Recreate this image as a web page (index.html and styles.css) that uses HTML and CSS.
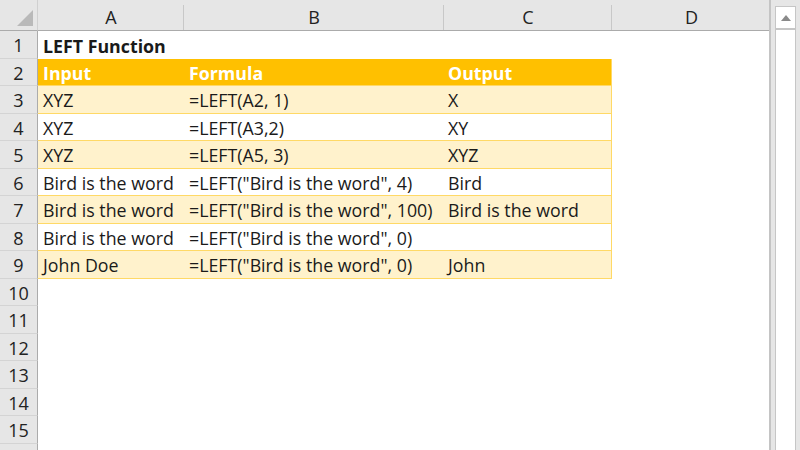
FILE: index.html
```html
<!DOCTYPE html>
<html>
<head>
<meta charset="utf-8">
<link rel="stylesheet" href="styles.css">
</head>
<body>
<div class="app">
  <div class="sheet">
    <div class="corner"><svg width="20" height="20" viewBox="0 0 20 20"><polygon points="18,2 18,18 2,18" fill="#b9b9b9"/></svg></div>
    <div class="colhdr">A</div>
    <div class="colhdr">B</div>
    <div class="colhdr">C</div>
    <div class="colhdr">D</div>

    <div class="rowhdr">1</div>
    <div class="cell bold">LEFT Function</div><div class="cell"></div><div class="cell"></div><div class="cell"></div>

    <div class="rowhdr">2</div>
    <div class="cell th">Input</div><div class="cell th">Formula</div><div class="cell th last">Output</div><div class="cell"></div>

    <div class="rowhdr">3</div>
    <div class="cell band">XYZ</div><div class="cell band">=LEFT(A2, 1)</div><div class="cell band last">X</div><div class="cell"></div>

    <div class="rowhdr">4</div>
    <div class="cell plain">XYZ</div><div class="cell plain">=LEFT(A3,2)</div><div class="cell plain last">XY</div><div class="cell"></div>

    <div class="rowhdr">5</div>
    <div class="cell band">XYZ</div><div class="cell band">=LEFT(A5, 3)</div><div class="cell band last">XYZ</div><div class="cell"></div>

    <div class="rowhdr">6</div>
    <div class="cell plain">Bird is the word</div><div class="cell plain">=LEFT("Bird is the word", 4)</div><div class="cell plain last">Bird</div><div class="cell"></div>

    <div class="rowhdr">7</div>
    <div class="cell band">Bird is the word</div><div class="cell band">=LEFT("Bird is the word", 100)</div><div class="cell band last">Bird is the word</div><div class="cell"></div>

    <div class="rowhdr">8</div>
    <div class="cell plain">Bird is the word</div><div class="cell plain">=LEFT("Bird is the word", 0)</div><div class="cell plain last"></div><div class="cell"></div>

    <div class="rowhdr">9</div>
    <div class="cell band">John Doe</div><div class="cell band">=LEFT("Bird is the word", 0)</div><div class="cell band last">John</div><div class="cell"></div>

    <div class="rowhdr">10</div><div class="cell"></div><div class="cell"></div><div class="cell"></div><div class="cell"></div>
    <div class="rowhdr">11</div><div class="cell"></div><div class="cell"></div><div class="cell"></div><div class="cell"></div>
    <div class="rowhdr">12</div><div class="cell"></div><div class="cell"></div><div class="cell"></div><div class="cell"></div>
    <div class="rowhdr">13</div><div class="cell"></div><div class="cell"></div><div class="cell"></div><div class="cell"></div>
    <div class="rowhdr">14</div><div class="cell"></div><div class="cell"></div><div class="cell"></div><div class="cell"></div>
    <div class="rowhdr">15</div><div class="cell"></div><div class="cell"></div><div class="cell"></div><div class="cell"></div>
    <div class="rowhdr"></div><div class="cell"></div><div class="cell"></div><div class="cell"></div><div class="cell"></div>
  </div>
  <div class="scroll">
    <div class="track">
      <div class="arrow"><svg width="12" height="8" viewBox="0 0 12 8"><polygon points="6,1 11,7 1,7" fill="#8a8a8a"/></svg></div>
    </div>
  </div>
</div>
</body>
</html>
```

FILE: styles.css
```css
html, body {
  margin: 0;
  padding: 0;
  background: #ffffff;
  overflow: hidden;
}
.app {
  width: 800px;
  height: 450px;
  display: flex;
  font-family: "Open Sans", "Liberation Sans", sans-serif;
  color: #1a1a1a;
  background: #e6e6e6;
}
.sheet {
  width: 771px;
  height: 450px;
  display: grid;
  grid-template-columns: 38px 146px 260px 168px 159px;
  grid-template-rows: 31px;
  grid-auto-rows: 27.5px;
  background: #ffffff;
  overflow: hidden;
  box-sizing: border-box;
  border-right: 2px solid #c4c4c4;
}
.corner {
  background: #e6e6e6;
  border-right: 1px solid #d0d0d0;
  border-bottom: 1px solid #ababab;
  box-sizing: border-box;
  display: flex;
  align-items: flex-end;
  justify-content: flex-end;
  padding: 0 2px 2px 0;
}
.colhdr {
  background: #e6e6e6;
  border-bottom: 1px solid #ababab;
  box-sizing: border-box;
  display: flex;
  align-items: center;
  justify-content: center;
  font-size: 18px;
  padding-top: 3px;
  color: #222;
  position: relative;
}
.colhdr::after {
  content: "";
  position: absolute;
  right: 0;
  top: 5px;
  bottom: 0;
  width: 1px;
  background: #c8c8c8;
}
.rowhdr {
  background: #e6e6e6;
  border-right: 1px solid #ababab;
  border-bottom: 1px solid #d4d4d4;
  box-sizing: border-box;
  display: flex;
  align-items: center;
  justify-content: center;
  font-size: 18px;
  color: #222;
  padding-top: 2px;
}
.cell {
  box-sizing: border-box;
  display: flex;
  align-items: center;
  padding: 2px 0 0 5px;
  font-size: 17.8px;
  white-space: nowrap;
  overflow: visible;
}
.bold {
  font-weight: 700;
}
.th {
  background: #ffc000;
  color: #ffffff;
  font-weight: 700;
  border-bottom: 1px solid #ffd966;
}
.band {
  background: #fff2cc;
  border-bottom: 1px solid #ffd966;
}
.plain {
  background: #ffffff;
  border-bottom: 1px solid #ffd966;
}
.last {
  border-right: 1px solid #ffd966;
  padding-left: 4px;
}
.scroll {
  width: 29px;
  height: 450px;
  background: #e6e6e6;
  display: flex;
  padding: 6px 4px 0 4px;
  box-sizing: border-box;
}
.track {
  flex: 1;
  background: #ffffff;
  border: 1px solid #c6c6c6;
  border-bottom: none;
  display: flex;
  flex-direction: column;
}
.arrow {
  height: 21px;
  border-bottom: 2px solid #c6c6c6;
  display: flex;
  align-items: center;
  justify-content: center;
}
```
